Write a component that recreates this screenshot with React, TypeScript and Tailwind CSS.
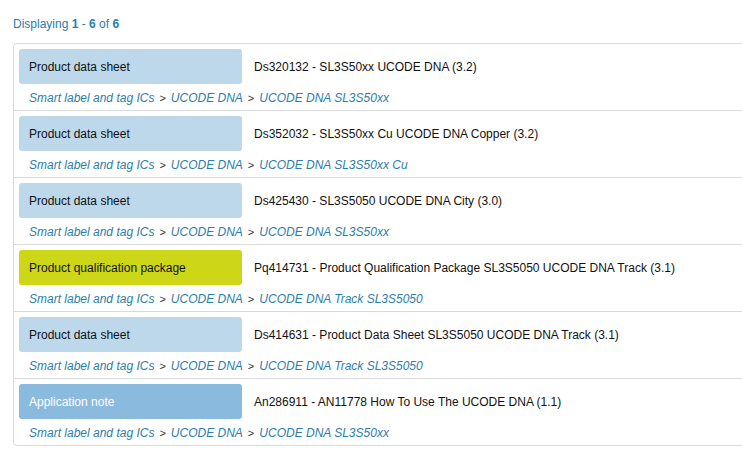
import React from "react";

type Row = {
  type: string;
  kind: "ds" | "pq" | "an";
  title: string;
  crumbs: string[];
};

const rows: Row[] = [
  { type: "Product data sheet", kind: "ds", title: "Ds320132 - SL3S50xx UCODE DNA (3.2)", crumbs: ["Smart label and tag ICs", "UCODE DNA", "UCODE DNA SL3S50xx"] },
  { type: "Product data sheet", kind: "ds", title: "Ds352032 - SL3S50xx Cu UCODE DNA Copper (3.2)", crumbs: ["Smart label and tag ICs", "UCODE DNA", "UCODE DNA SL3S50xx Cu"] },
  { type: "Product data sheet", kind: "ds", title: "Ds425430 - SL3S5050 UCODE DNA City (3.0)", crumbs: ["Smart label and tag ICs", "UCODE DNA", "UCODE DNA SL3S50xx"] },
  { type: "Product qualification package", kind: "pq", title: "Pq414731 - Product Qualification Package SL3S5050 UCODE DNA Track (3.1)", crumbs: ["Smart label and tag ICs", "UCODE DNA", "UCODE DNA Track SL3S5050"] },
  { type: "Product data sheet", kind: "ds", title: "Ds414631 - Product Data Sheet SL3S5050 UCODE DNA Track (3.1)", crumbs: ["Smart label and tag ICs", "UCODE DNA", "UCODE DNA Track SL3S5050"] },
  { type: "Application note", kind: "an", title: "An286911 - AN11778 How To Use The UCODE DNA (1.1)", crumbs: ["Smart label and tag ICs", "UCODE DNA", "UCODE DNA SL3S50xx"] },
];

function Badge({ row }: { row: Row }) {
  const cls =
    row.kind === "ds"
      ? "bg-[#bdd7eb] text-[#111]"
      : row.kind === "pq"
      ? "bg-[#cdd718] text-[#111]"
      : "bg-[#8bbadf] text-white";
  return (
    <div className={`w-[223px] h-[35px] shrink-0 rounded-[3px] flex items-center pl-[10px] pt-[2px] ${cls}`}>
      {row.type}
    </div>
  );
}

export default function App() {
  return (
    <div
      className="w-[742px] h-[451px] bg-white overflow-hidden text-[12px] leading-[15px] text-[#111]"
      style={{ fontFamily: '"Liberation Sans", Arial, sans-serif' }}
    >
      <div className="pl-[13px] pt-[17px] h-[43px] text-[#2b7ea9]">
        Displaying <b>1</b> - <b>6</b> of <b>6</b>
      </div>
      <div className="ml-[13px] w-[760px] border border-[#dadada] rounded-[4px]">
        {rows.map((r, i) => (
          <div key={i} className={`pt-[5px] pl-[5px] ${i < rows.length - 1 ? "h-[67px] border-b border-[#dadada]" : "h-[66px]"}`}>
            <div className="flex items-center">
              <Badge row={r} />
              <div className="ml-[12px] pt-[2px]">{r.title}</div>
            </div>
            <div className="h-[26px] flex items-center pl-[10px] pt-[2px]">
              {r.crumbs.map((c, j) => (
                <React.Fragment key={j}>
                  {j > 0 && <span className="text-[#333] mx-[5px] text-[11px]">&gt;</span>}
                  <span className="italic text-[#2b7ea9]">{c}</span>
                </React.Fragment>
              ))}
            </div>
          </div>
        ))}
      </div>
    </div>
  );
}
